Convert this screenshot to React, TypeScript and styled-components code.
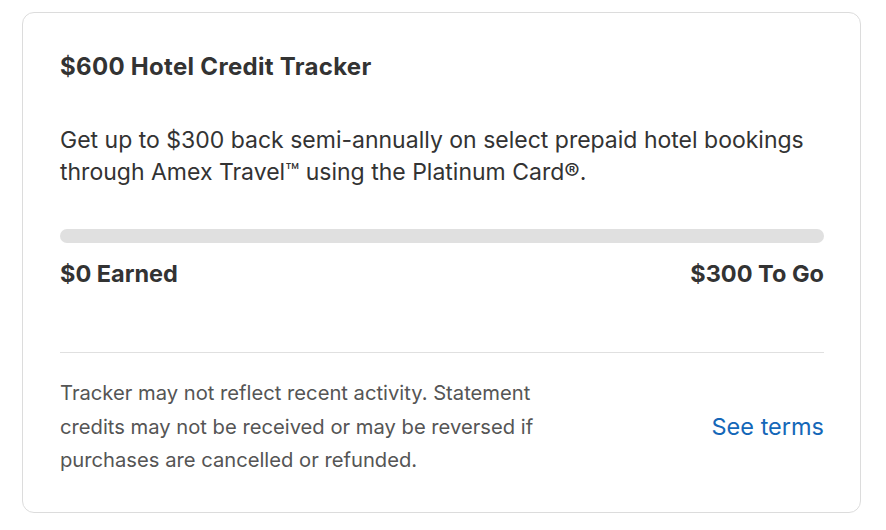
import styled, { createGlobalStyle } from "styled-components";

const GlobalStyle = createGlobalStyle`
  html, body {
    margin: 0;
    padding: 0;
    background: #ffffff;
  }
  body {
    font-family: Inter, "Noto Sans", "Liberation Sans", sans-serif;
    -webkit-font-smoothing: antialiased;
  }
`;

const Page = styled.div`
  padding: 12px 0 0 22px;
`;

const Card = styled.section`
  box-sizing: border-box;
  width: 839px;
  border: 1px solid #dcdcdc;
  border-radius: 12px;
  background: #ffffff;
  padding: 40px 36px 35px 37px;
`;

const Title = styled.h2`
  margin: 0;
  font-size: 24px;
  line-height: 28px;
  font-weight: 700;
  letter-spacing: 0.3px;
  color: #333333;
`;

const Description = styled.p`
  margin: 43px 0 0;
  font-size: 23px;
  line-height: 32px;
  font-weight: 400;
  color: #333333;
`;

const Track = styled.div`
  margin-top: 41px;
  height: 14px;
  border-radius: 7px;
  background: #e0e0e0;
  overflow: hidden;
`;

const Fill = styled.div`
  height: 100%;
  background: #006fcf;
  border-radius: 7px;
`;

const Labels = styled.div`
  margin-top: 17px;
  display: flex;
  justify-content: space-between;
  align-items: center;
`;

const Label = styled.span`
  font-size: 23.5px;
  line-height: 28px;
  font-weight: 700;
  color: #333333;
`;

const Divider = styled.hr`
  margin: 64px 0 0;
  border: none;
  border-top: 1px solid #e0e0e0;
`;

const Footer = styled.div`
  margin-top: 23px;
  display: flex;
  justify-content: space-between;
  align-items: center;
`;

const Disclaimer = styled.p`
  margin: 0;
  max-width: 505px;
  font-size: 20.2px;
  line-height: 33.5px;
  color: #555555;
`;

const TermsLink = styled.a`
  margin-top: 2px;
  font-size: 23.5px;
  line-height: 28px;
  color: #1467b8;
  text-decoration: none;
  cursor: pointer;
`;

const earned = 0;
const total = 300;

export default function App() {
  return (
    <>
      <GlobalStyle />
      <Page>
        <Card>
          <Title>$600 Hotel Credit Tracker</Title>
          <Description>
            Get up to $300 back semi-annually on select prepaid hotel bookings
            through Amex Travel™ using the Platinum Card®.
          </Description>
          <Track>
            <Fill style={{ width: `${(earned / total) * 100}%` }} />
          </Track>
          <Labels>
            <Label>${earned} Earned</Label>
            <Label>${total - earned} To Go</Label>
          </Labels>
          <Divider />
          <Footer>
            <Disclaimer>
              Tracker may not reflect recent activity. Statement credits may not
              be received or may be reversed if purchases are cancelled or
              refunded.
            </Disclaimer>
            <TermsLink href="#">See terms</TermsLink>
          </Footer>
        </Card>
      </Page>
    </>
  );
}
